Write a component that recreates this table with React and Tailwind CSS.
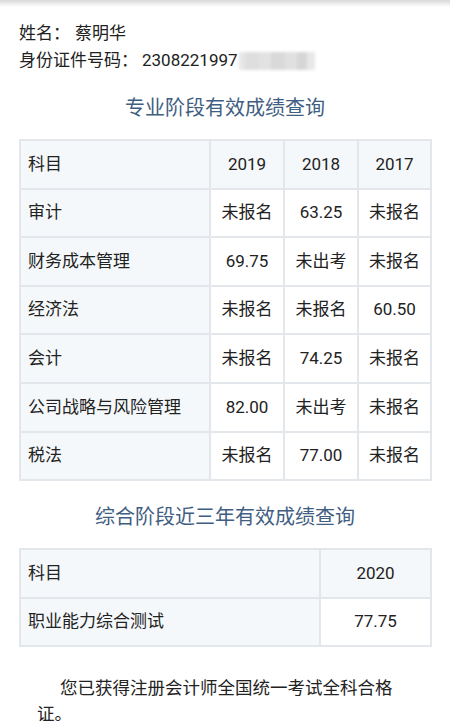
import React from "react";

const font = { fontFamily: 'Roboto, "Noto Sans CJK SC", sans-serif' };

const rows1 = [
  ["审计", "未报名", "63.25", "未报名"],
  ["财务成本管理", "69.75", "未出考", "未报名"],
  ["经济法", "未报名", "未报名", "60.50"],
  ["会计", "未报名", "74.25", "未报名"],
  ["公司战略与风险管理", "82.00", "未出考", "未报名"],
  ["税法", "未报名", "77.00", "未报名"],
];

const bd = "border-2 border-[#e3e6ea]";

export default function App() {
  return (
    <div className="w-[450px] h-[728px] bg-white text-[#222] overflow-hidden" style={font}>
      <div className="h-[7px] bg-gradient-to-b from-[#d9d9d9] to-white" />
      <div className="pl-[19px] pt-[13px] text-[17px] leading-[27px]">
        <div className="flex">
          <span>姓名：</span>
          <span className="ml-[5px]">蔡明华</span>
        </div>
        <div className="flex items-center">
          <span>身份证件号码：</span>
          <span className="ml-[4px]">2308221997</span>
          <div className="ml-[1px] flex h-[18px] w-[76px] blur-[1.5px]">
            <div className="w-[6px] bg-[#e6e6e6]" />
            <div className="w-[14px] bg-[#dedede]" />
            <div className="w-[12px] bg-[#e2e2e2]" />
            <div className="w-[14px] bg-[#d9d9d9]" />
            <div className="w-[12px] bg-[#e0e0e0]" />
            <div className="w-[10px] bg-[#d6d6d6]" />
            <div className="w-[8px] bg-[#e8e8e8]" />
          </div>
        </div>
      </div>

      <div className="mt-[19px] text-center text-[20px] leading-[30px] text-[#3f5e82]">专业阶段有效成绩查询</div>

      <div className="px-[19px] mt-[16px]">
        <table className="w-[411px] table-fixed border-collapse text-[17px]">
          <colgroup>
            <col className="w-[190px]" />
            <col className="w-[74px]" />
            <col className="w-[74px]" />
            <col className="w-[73px]" />
          </colgroup>
          <tbody>
            <tr className="h-[48.6px] bg-[#f5f8fa]">
              <td className={`${bd} pl-[7px]`}>科目</td>
              <td className={`${bd} text-center`}>2019</td>
              <td className={`${bd} text-center`}>2018</td>
              <td className={`${bd} text-center`}>2017</td>
            </tr>
            {rows1.map((r) => (
              <tr key={r[0]} className="h-[48.6px]">
                <td className={`${bd} pl-[7px] bg-[#f5f8fa] whitespace-nowrap`}>{r[0]}</td>
                <td className={`${bd} text-center`}>{r[1]}</td>
                <td className={`${bd} text-center`}>{r[2]}</td>
                <td className={`${bd} text-center`}>{r[3]}</td>
              </tr>
            ))}
          </tbody>
        </table>
      </div>

      <div className="mt-[21px] text-center text-[20px] leading-[30px] text-[#3f5e82]">综合阶段近三年有效成绩查询</div>

      <div className="px-[19px] mt-[16px]">
        <table className="w-[411px] table-fixed border-collapse text-[17px]">
          <colgroup>
            <col className="w-[300px]" />
            <col className="w-[111px]" />
          </colgroup>
          <tbody>
            <tr className="h-[48.6px] bg-[#f5f8fa]">
              <td className={`${bd} pl-[7px]`}>科目</td>
              <td className={`${bd} text-center`}>2020</td>
            </tr>
            <tr className="h-[48.6px]">
              <td className={`${bd} pl-[7px] bg-[#f5f8fa]`}>职业能力综合测试</td>
              <td className={`${bd} text-center`}>77.75</td>
            </tr>
          </tbody>
        </table>
      </div>

      <p className="ml-[37px] w-[371px] mt-[28px] text-[17.5px] leading-[26px] indent-[23px]">
        您已获得注册会计师全国统一考试全科合格证。
      </p>
    </div>
  );
}
